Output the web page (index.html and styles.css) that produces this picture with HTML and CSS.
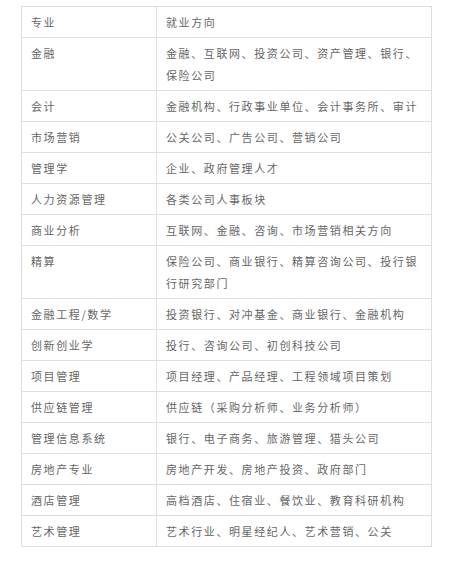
FILE: index.html
```html
<!DOCTYPE html>
<html lang="zh-CN">
<head>
<meta charset="utf-8">
<title>专业与就业方向</title>
<link rel="stylesheet" href="styles.css">
</head>
<body>
<div class="page">
<table class="majors">
<tbody>
<tr><td class="major">专业</td><td class="dir">就业方向</td></tr>
<tr><td class="major">金融</td><td class="dir">金融、互联网、投资公司、资产管理、银行、保险公司</td></tr>
<tr><td class="major">会计</td><td class="dir">金融机构、行政事业单位、会计事务所、审计</td></tr>
<tr><td class="major">市场营销</td><td class="dir">公关公司、广告公司、营销公司</td></tr>
<tr><td class="major">管理学</td><td class="dir">企业、政府管理人才</td></tr>
<tr><td class="major">人力资源管理</td><td class="dir">各类公司人事板块</td></tr>
<tr><td class="major">商业分析</td><td class="dir">互联网、金融、咨询、市场营销相关方向</td></tr>
<tr><td class="major">精算</td><td class="dir">保险公司、商业银行、精算咨询公司、投行银行研究部门</td></tr>
<tr><td class="major">金融工程/数学</td><td class="dir">投资银行、对冲基金、商业银行、金融机构</td></tr>
<tr><td class="major">创新创业学</td><td class="dir">投行、咨询公司、初创科技公司</td></tr>
<tr><td class="major">项目管理</td><td class="dir">项目经理、产品经理、工程领域项目策划</td></tr>
<tr><td class="major">供应链管理</td><td class="dir">供应链（采购分析师、业务分析师）</td></tr>
<tr><td class="major">管理信息系统</td><td class="dir">银行、电子商务、旅游管理、猎头公司</td></tr>
<tr><td class="major">房地产专业</td><td class="dir">房地产开发、房地产投资、政府部门</td></tr>
<tr><td class="major">酒店管理</td><td class="dir">高档酒店、住宿业、餐饮业、教育科研机构</td></tr>
<tr><td class="major">艺术管理</td><td class="dir">艺术行业、明星经纪人、艺术营销、公关</td></tr>
</tbody>
</table>
</div>
</body>
</html>
```
FILE: styles.css
```css
html, body {
  margin: 0;
  padding: 0;
  background: #ffffff;
}
.page {
  padding: 6px 0 0 21px;
}
.majors {
  border-collapse: collapse;
  width: 411px;
  table-layout: fixed;
  font-family: "Noto Sans CJK SC", "Noto Sans", sans-serif;
  font-size: 11px;
  letter-spacing: 1.6px;
  color: #666666;
}
.majors td {
  border: 1px solid #dedede;
  padding: 4px 8px 4px 9px;
  line-height: 22px;
  vertical-align: top;
  text-align: left;
}
.majors .major {
  width: 117px;
}
```
